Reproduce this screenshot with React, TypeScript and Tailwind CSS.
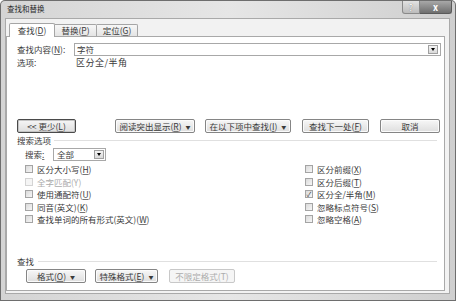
import React from 'react';

function U({ k }: { k: string }) {
  return <span className="underline underline-offset-[1px] decoration-[#777]">{k}</span>;
}

function Btn({ w, children, caret, disabled, focus }: { w: string; children: React.ReactNode; caret?: boolean; disabled?: boolean; focus?: boolean }) {
  return (
    <div
      className={`${w} h-[14px] shrink-0 rounded-[2px] border flex items-center justify-center gap-[4px] text-[8.5px] leading-none ${
        disabled
          ? 'border-[#c8c8c8] bg-[#f5f5f5] text-[#acacac]'
          : focus
          ? 'border-[#4a4a4a] bg-gradient-to-b from-[#f6f6f6] to-[#dedede] text-[#3a3a3a] shadow-[inset_0_0_0_1px_#c4c4c4]'
          : 'border-[#858585] bg-gradient-to-b from-[#f7f7f7] to-[#dedede] text-[#3a3a3a] shadow-[inset_0_0_0_1px_#fbfbfb]'
      }`}
    >
      <span>{children}</span>
      {caret && <span className="text-[5px]">▼</span>}
    </div>
  );
}

function Check({ label, checked, disabled }: { label: React.ReactNode; checked?: boolean; disabled?: boolean }) {
  return (
    <div className="h-[12.5px] flex items-center gap-[4px] text-[8.5px] leading-none">
      <div
        className={`w-[8px] h-[8px] border flex items-center justify-center text-[7px] leading-none ${
          disabled ? 'border-[#d4d4d4] bg-[#f5f5f5]' : 'border-[#a4a4a4] bg-gradient-to-br from-[#dadada] to-[#f6f6f6] text-[#444]'
        }`}
      >
        {checked ? '✓' : ''}
      </div>
      <span className={disabled ? 'text-[#ababab]' : 'text-[#3a3a3a]'}>{label}</span>
    </div>
  );
}

function Arrow() {
  return (
    <div className="w-[10px] h-[9px] border border-[#a0a0a0] bg-gradient-to-b from-[#f4f4f4] to-[#dadada] flex items-center justify-center">
      <div className="w-0 h-0 border-l-[2.5px] border-r-[2.5px] border-t-[3px] border-l-transparent border-r-transparent border-t-black" />
    </div>
  );
}

export default function App() {
  const left: [React.ReactNode, boolean?, boolean?][] = [
    [<>区分大小写(<U k="H" />)</>],
    [<>全字匹配(Y)</>, false, true],
    [<>使用通配符(<U k="U" />)</>],
    [<>同音(英文)(<U k="K" />)</>],
    [<>查找单词的所有形式(英文)(<U k="W" />)</>],
  ];
  const right: [React.ReactNode, boolean?][] = [
    [<>区分前缀(<U k="X" />)</>],
    [<>区分后缀(<U k="T" />)</>],
    [<>区分全/半角(<U k="M" />)</>, true],
    [<>忽略标点符号(<U k="S" />)</>],
    [<>忽略空格(<U k="A" />)</>],
  ];

  return (
    <div className="w-[456px] h-[301px] bg-[#6e6e6e] p-px rounded-t-[5px] font-['Noto_Sans_CJK_SC','Noto_Sans',sans-serif] text-[#3a3a3a]">
      <div className="h-full flex flex-col rounded-t-[4px] bg-gradient-to-r from-[#d4d4d4] via-[#e6e6e6] to-[#cfcfcf]">
        {/* title bar */}
        <div className="h-[17px] flex items-start shrink-0">
          <div className="pl-[6px] pt-[4px] text-[7.5px] leading-none text-[#2a2a2a]">查找和替换</div>
          <div className="ml-auto mr-[3px] flex">
            <div className="w-[18px] h-[13px] border border-[#8a8a8a] border-t-0 rounded-bl-[3px] bg-gradient-to-b from-[#e2e2e2] to-[#bcbcbc] flex items-center justify-center text-[9px] leading-none text-white [text-shadow:0_0_1px_#555]">
              ?
            </div>
            <div className="w-[32px] h-[13px] border border-l-0 border-t-0 border-[#5a5a5a] rounded-br-[3px] bg-gradient-to-b from-[#a8a8a8] to-[#6f6f6f] flex items-center justify-center text-[9px] font-bold leading-none text-white">
              x
            </div>
          </div>
        </div>

        {/* client area */}
        <div className="flex-1 ml-[4px] mr-[5px] mb-[6px] bg-[#f2f2f2] border border-[#a9a9a9] flex flex-col pt-[3px] pr-[4px] pb-[2px]">
          <div className="h-[14px] flex items-end pl-[3px] shrink-0 relative z-10 text-[8.5px] leading-none">
            <div className="w-[46px] h-[14px] -mb-px bg-white border border-b-0 border-[#a5a5a5] rounded-t-[2px] flex items-center justify-center">
              <span>查找(<U k="D" />)</span>
            </div>
            <div className="w-[42px] h-[12px] bg-gradient-to-b from-[#f7f7f7] to-[#e4e4e4] border border-l-0 border-b-0 border-[#a5a5a5] rounded-tr-[2px] flex items-center justify-center">
              <span>替换(<U k="P" />)</span>
            </div>
            <div className="w-[41px] h-[12px] bg-gradient-to-b from-[#f7f7f7] to-[#e4e4e4] border border-l-0 border-b-0 border-[#a5a5a5] rounded-tr-[2px] flex items-center justify-center">
              <span>定位(<U k="G" />)</span>
            </div>
          </div>

          {/* tab panel */}
          <div className="flex-1 bg-white border border-[#a9a9a9] flex flex-col pt-[6px] pl-[10px] pr-[3px] pb-[7px]">
            <div className="h-[13px] flex items-center text-[8.5px] leading-none">
              <span className="w-[57px]">查找内容(<U k="N" />):</span>
              <div className="flex-1 h-[13px] border border-[#a8a8a8] flex items-center pl-[2px] pr-[2px]">
                <span className="flex-1">字符</span>
                <Arrow />
              </div>
            </div>
            <div className="h-[11px] mt-[1px] flex items-center text-[8.5px] leading-none">
              <span className="w-[59px]">选项:</span>
              <span className="text-[9px] tracking-[0.5px]">区分全/半角</span>
            </div>

            <div className="mt-[51px] flex">
              <Btn w="w-[59px]" focus>
                &lt;&lt; 更少(<U k="L" />)
              </Btn>
              <div className="w-[39px]" />
              <Btn w="w-[80px]" caret>
                阅读突出显示(<U k="R" />)
              </Btn>
              <div className="w-[10px]" />
              <Btn w="w-[86px]" caret>
                在以下项中查找(<U k="I" />)
              </Btn>
              <div className="w-[11px]" />
              <Btn w="w-[67px]">
                查找下一处(<U k="F" />)
              </Btn>
              <div className="w-[11px]" />
              <Btn w="w-[60px]">取消</Btn>
            </div>

            <div className="h-[10px] mt-[2px] flex items-center gap-[3px] text-[8.5px] leading-none mr-[4px]">
              <span>搜索选项</span>
              <div className="flex-1 h-px bg-[#e0e0e0]" />
            </div>

            <div className="h-[13px] mt-[3px] ml-[8px] flex items-center text-[8.5px] leading-none">
              <span className="w-[28px]">
                搜索<U k=":" />
              </span>
              <div className="w-[53px] h-[13px] border border-[#a8a8a8] flex items-center pl-[3px] pr-[1px]">
                <span className="flex-1">全部</span>
                <Arrow />
              </div>
            </div>

            <div className="mt-[2px] ml-[8px] flex">
              <div className="w-[280px] flex flex-col">
                {left.map(([l, c, d], i) => (
                  <Check key={i} label={l} checked={c} disabled={d} />
                ))}
              </div>
              <div className="flex flex-col">
                {right.map(([l, c], i) => (
                  <Check key={i} label={l} checked={c} />
                ))}
              </div>
            </div>

            <div className="mt-auto h-[10px] flex items-center gap-[4px] text-[8.5px] leading-none mr-[4px]">
              <span>查找</span>
              <div className="flex-1 h-px bg-[#e0e0e0]" />
            </div>
            <div className="mt-[3px] ml-[9px] flex">
              <Btn w="w-[60px]" caret>
                格式(<U k="O" />)
              </Btn>
              <div className="w-[9px]" />
              <Btn w="w-[63px]" caret>
                特殊格式(<U k="E" />)
              </Btn>
              <div className="w-[11px]" />
              <Btn w="w-[66px]" disabled>
                不限定格式(T)
              </Btn>
            </div>
          </div>
        </div>
      </div>
    </div>
  );
}
